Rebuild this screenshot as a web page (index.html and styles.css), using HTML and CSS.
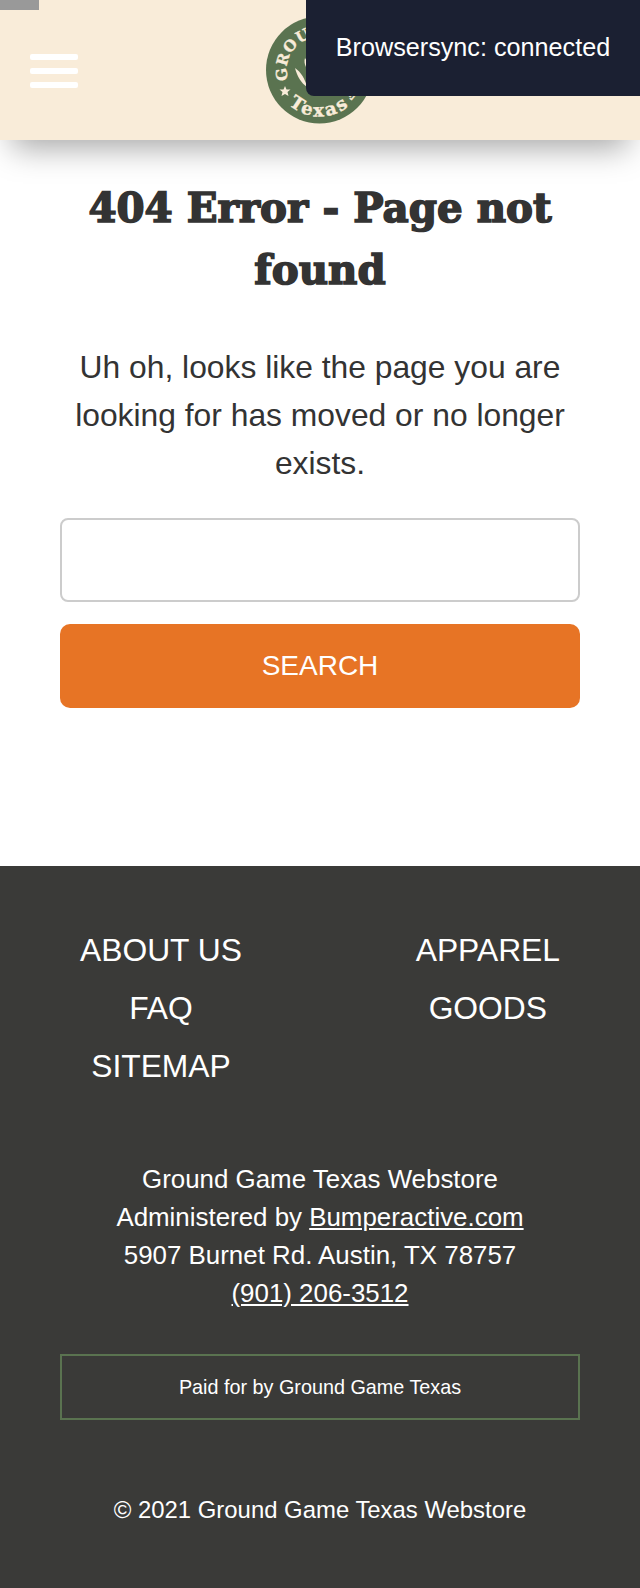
FILE: index.html
```html
<!DOCTYPE html>
<html lang="en">
<head>
<meta charset="utf-8">
<title>404 Error - Page not found</title>
<link rel="stylesheet" href="styles.css">
</head>
<body>
<header class="site-header">
  <button class="menu-toggle" aria-label="Menu"><span></span><span></span><span></span></button>
  <svg class="logo" viewBox="0 0 108 108" width="108" height="108" aria-label="Ground Game Texas">
    <circle cx="53.5" cy="54" r="53.5" fill="#5a7350"/>
    <defs>
      <path id="arc-top" d="M 22.5 64 A 33 33 0 1 1 75 79"/>
      <path id="arc-bottom" d="M 7 54 A 46.500 46.500 0 0 0 100 54"/>
    </defs>
    <text class="logo-text" font-size="15" letter-spacing="0.5"><textPath href="#arc-top">GROUND GAME</textPath></text>
    <text class="logo-text" font-size="18" letter-spacing="2.5"><textPath href="#arc-bottom" startOffset="50%" text-anchor="middle">Texas</textPath></text>
    <polygon fill="#f9ecd9" points="19,70 20.5,73.5 24.5,73.5 21.5,76 22.5,80 19,78 15.5,80 16.5,76 13.5,73.5 17.5,73.5"/>
    <path fill="#f9ecd9" d="M29 52 C35 56 39 63 41 71 C35 67 31 60 29 52 Z"/>
    <path fill="#f9ecd9" d="M39 42 C41 44 41 48 40 51 C38.500 48 38 45 39 42 Z"/>
    <path fill="#f9ecd9" d="M78 52 C72 56 68 63 66 71 C72 67 76 60 78 52 Z"/>
    <path fill="#f9ecd9" d="M53.500 32 C57 46 57 66 53.500 80 C50 66 50 46 53.500 32 Z"/>
  </svg>
</header>
<div class="corner-tab"></div>
<div class="bs-toast">Browsersync: connected</div>

<main class="content">
  <h1>404 Error - Page not found</h1>
  <p>Uh oh, looks like the page you are looking for has moved or no longer exists.</p>
  <form class="search">
    <input type="text" aria-label="Search">
    <button type="button">SEARCH</button>
  </form>
</main>

<footer class="site-footer">
  <nav class="footer-nav">
    <ul>
      <li>ABOUT US</li>
      <li>FAQ</li>
      <li>SITEMAP</li>
    </ul>
    <ul>
      <li>APPAREL</li>
      <li>GOODS</li>
    </ul>
  </nav>
  <address>
    Ground Game Texas Webstore<br>
    Administered by <a href="#">Bumperactive.com</a><br>
    5907 Burnet Rd. Austin, TX 78757<br>
    <a href="#">(901) 206-3512</a>
  </address>
  <div class="paid">Paid for by Ground Game Texas</div>
  <div class="copyright">© 2021 Ground Game Texas Webstore</div>
</footer>
</body>
</html>
```
FILE: styles.css
```css
* { box-sizing: border-box; }
html, body { margin: 0; padding: 0; }
body {
  width: 640px;
  height: 1588px;
  background: #fff;
  color: #333;
  font-family: "Liberation Sans", Arial, sans-serif;
  overflow: hidden;
  position: relative;
}
.site-header {
  height: 140px;
  background: #f9ecd9;
  display: flex;
  align-items: center;
  justify-content: center;
  position: relative;
  box-shadow: 0 20px 30px -12px rgba(0, 0, 0, 0.35);
}
.menu-toggle {
  position: absolute;
  left: 30px;
  top: 54px;
  width: 48px;
  padding: 0;
  background: none;
  border: 0;
  display: flex;
  flex-direction: column;
  gap: 8px;
}
.menu-toggle span {
  display: block;
  height: 6px;
  background: #fff;
  border-radius: 2px;
}
.logo { display: block; }
.logo-text {
  font-family: "DejaVu Serif", serif;
  font-weight: 700;
  fill: #f9ecd9;
  stroke: #f9ecd9;
  stroke-width: 0.4px;
}
.corner-tab {
  position: absolute;
  left: 0;
  top: 0;
  width: 39px;
  height: 10px;
  background: #999;
}
.bs-toast {
  position: absolute;
  right: 0;
  top: 0;
  width: 334px;
  height: 96px;
  background: #1b2032;
  color: #fff;
  font-size: 25.200px;
  line-height: 95px;
  text-align: center;
  border-bottom-left-radius: 8px;
}
.content {
  height: 726px;
  padding: 37px 60px 0;
  text-align: center;
}
h1 {
  margin: 0;
  font-family: "DejaVu Serif", serif;
  font-weight: 700;
  font-size: 40.400px;
  line-height: 62px;
  color: #333;
  -webkit-text-stroke: 1.600px #333;
}
p {
  margin: 42px 0 0;
  font-size: 31.800px;
  line-height: 48px;
}
.search { margin-top: 31px; display: flex; flex-direction: column; gap: 22px; }
.search input {
  height: 84px;
  border: 2px solid #ccc;
  border-radius: 8px;
  background: #fff;
}
.search button {
  height: 84px;
  border: 0;
  border-radius: 10px;
  background: #e77425;
  color: #fff;
  font-family: inherit;
  font-size: 28px;
}
.site-footer {
  height: 722px;
  background: #3a3a38;
  color: #fff;
  text-align: center;
  padding: 55px 60px 0;
}
.footer-nav {
  display: flex;
  justify-content: space-between;
  height: 174px;
  margin: 0 -60px;
  padding: 0 80px;
}
.footer-nav ul { list-style: none; margin: 0; padding: 0; }
.footer-nav li { font-size: 31.800px; line-height: 58px; }
address {
  margin-top: 65px;
  font-style: normal;
  font-size: 25.900px;
  line-height: 38px;
}
address a { color: #fff; text-decoration: underline; }
.paid {
  margin-top: 42px;
  height: 66px;
  border: 2px solid #5a7350;
  font-size: 19.800px;
  line-height: 62px;
}
.copyright {
  margin-top: 71px;
  font-size: 23.900px;
  line-height: 38px;
}
```
